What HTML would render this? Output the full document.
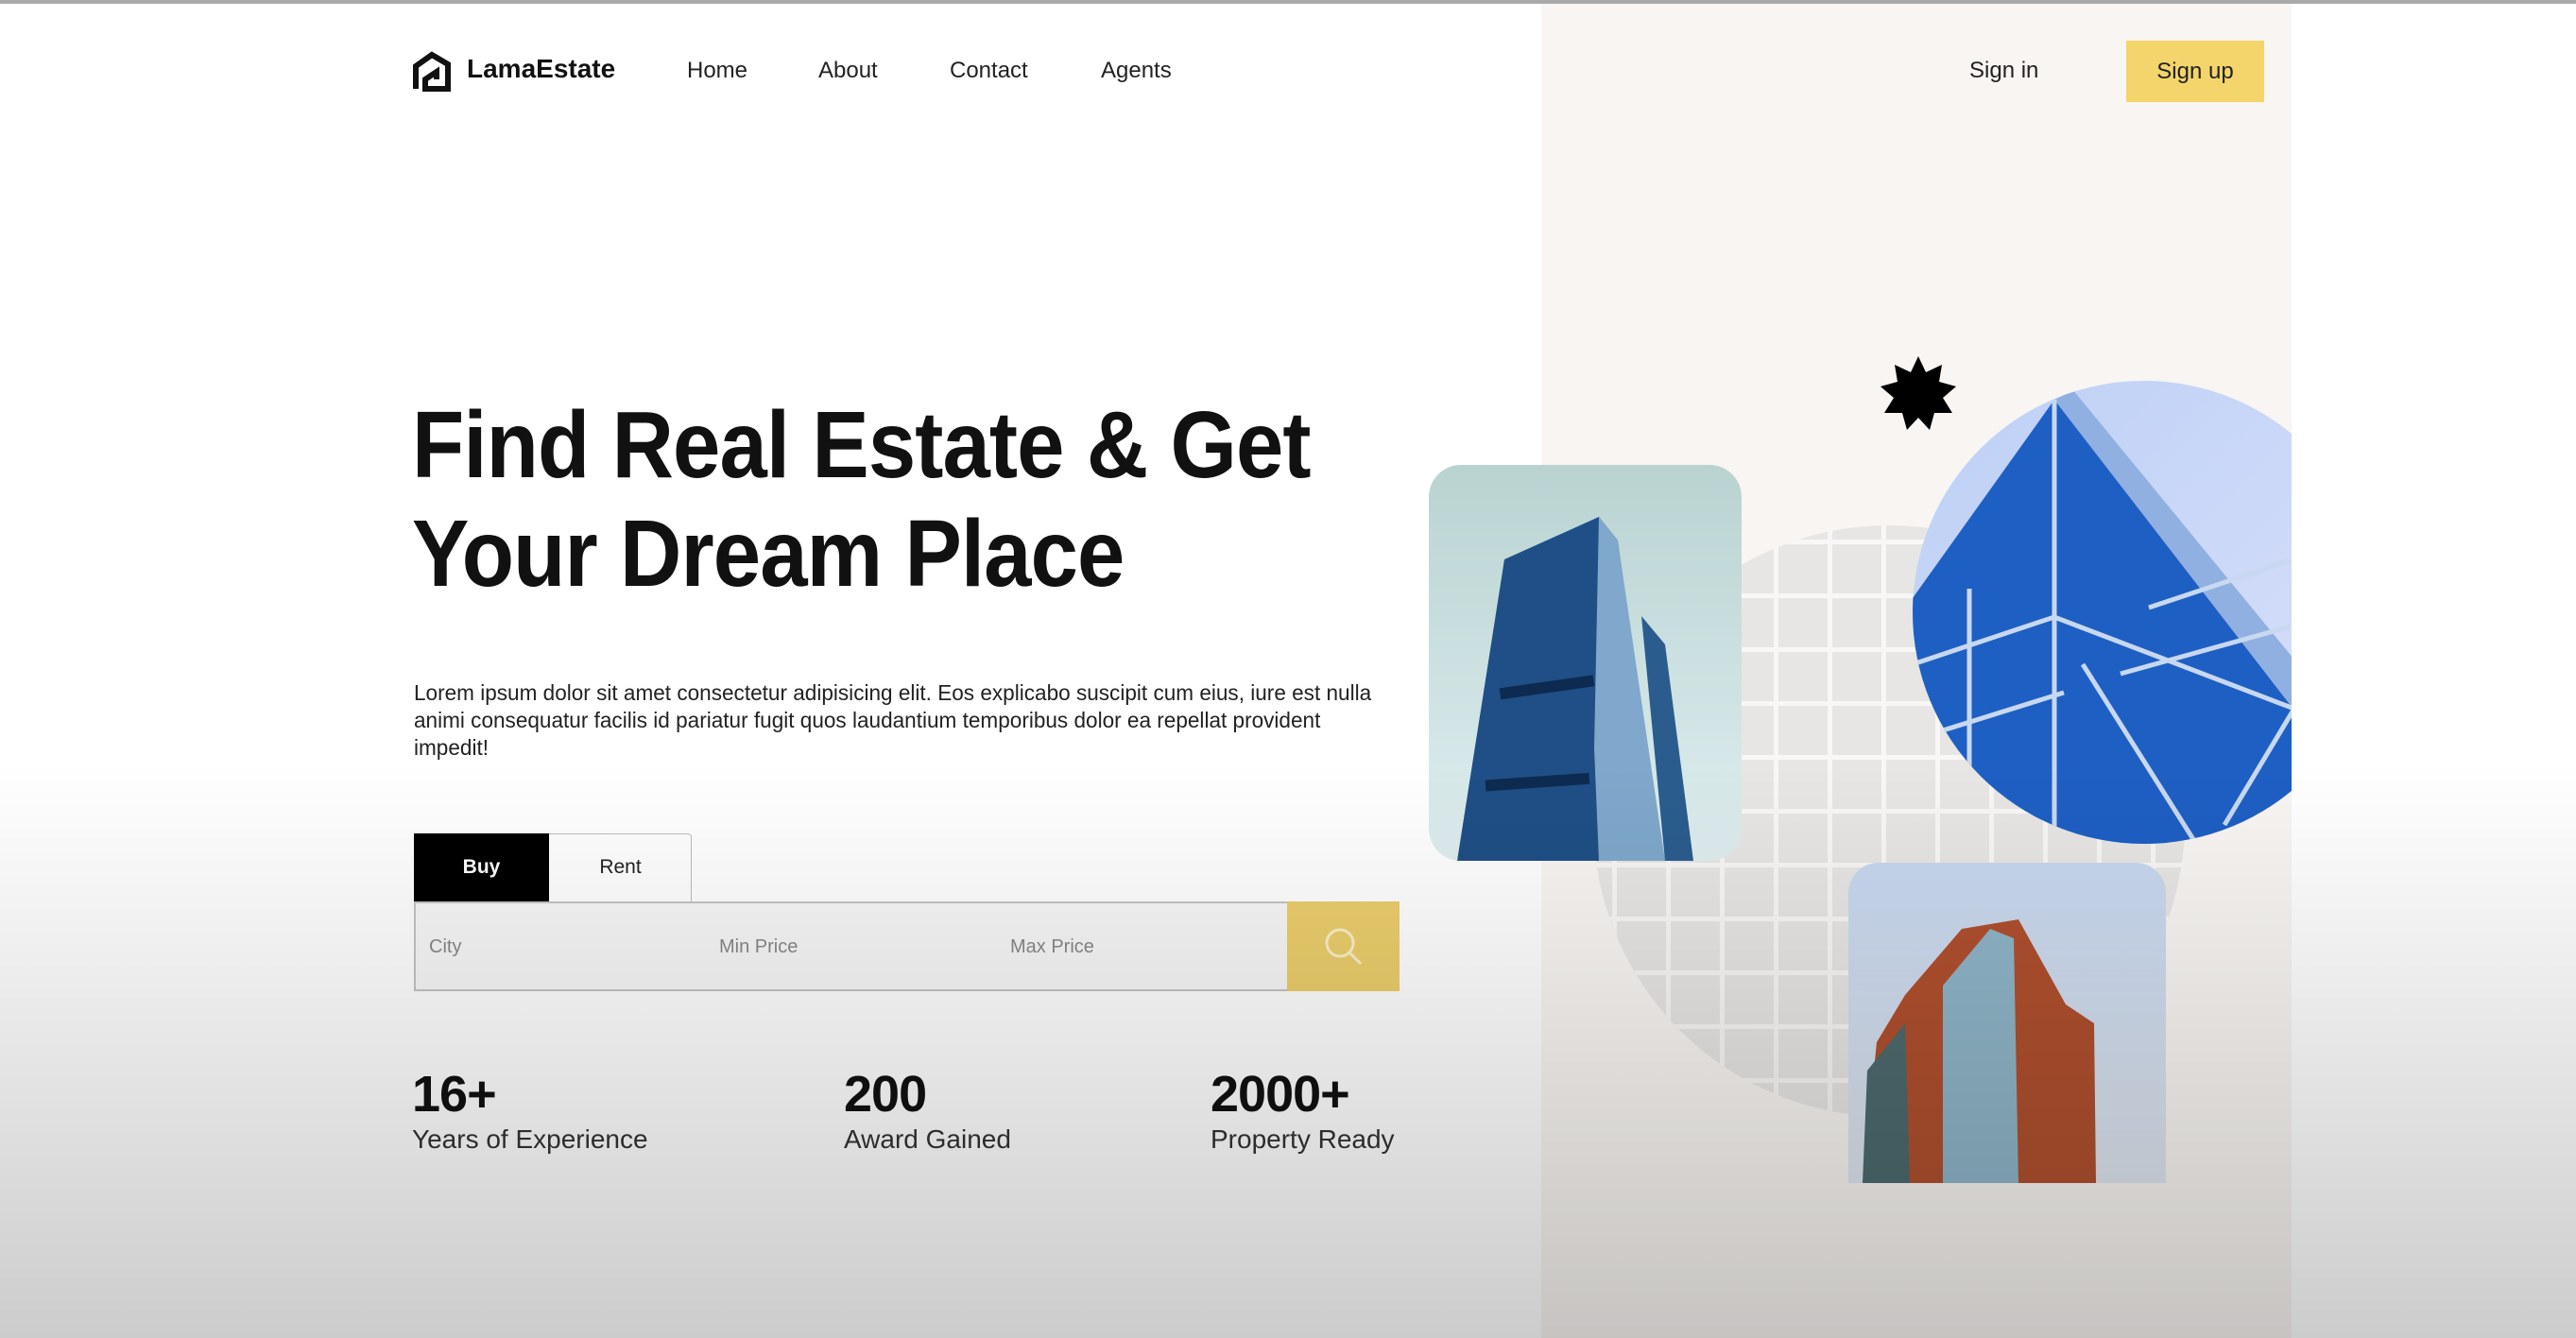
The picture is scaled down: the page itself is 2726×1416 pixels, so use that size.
<!DOCTYPE html>
<html><head><meta charset="utf-8"><style>
*{margin:0;padding:0;box-sizing:border-box}
body{width:2726px;height:1416px;overflow:hidden;position:relative;background:#fff;font-family:"Liberation Sans",sans-serif;color:#111}
.abs{position:absolute}
.topline{left:0;top:0;width:2726px;height:4px;background:#a9a9a9}
.panel{left:1631px;top:4px;width:794px;height:1412px;background:#f8f5f2}
.nav{font-size:24px;color:#222;top:61px}
h1{position:absolute;left:436px;top:414px;font-size:100px;line-height:115px;font-weight:bold;letter-spacing:-1px;color:#111;transform:scaleX(0.905);transform-origin:0 0;white-space:nowrap}
p.desc{position:absolute;left:438px;top:719px;width:1086px;font-size:23.5px;line-height:29px;color:#222;transform:scaleX(0.96);transform-origin:0 0}
.stat b{display:block;font-size:54px;line-height:60px;font-weight:bold;color:#111;letter-spacing:-1px}
.stat span{display:block;font-size:28px;line-height:36px;color:#333;font-weight:300}
.shade{left:0;top:0;width:2726px;height:1416px;background:linear-gradient(to bottom,rgba(0,0,0,0) 0,rgba(0,0,0,0) 57%,rgba(0,0,0,0.06) 70%,rgba(0,0,0,0.2) 100%);pointer-events:none}
</style></head><body>
<div class="abs topline"></div>
<div class="abs panel"></div>

<div class="abs" style="left:1686px;top:556px;width:626px;height:626px;border-radius:50%;overflow:hidden;background-color:#e8e6e4;background-image:linear-gradient(to right,#f8f7f5 5px,transparent 5px),linear-gradient(to bottom,#f8f7f5 5px,transparent 5px);background-size:57px 57px;background-position:20px 15px"></div>

<svg class="abs" style="left:436px;top:54px" width="42" height="44" viewBox="0 0 42 44"><path d="M4 40 V16 L21 4 L38 14 V40 H14 V30 L26 22 V30" fill="none" stroke="#111" stroke-width="6" stroke-linejoin="miter"/></svg>
<div class="abs" style="left:494px;top:57px;font-size:28px;font-weight:bold;color:#111">LamaEstate</div>
<div class="abs nav" style="left:727px">Home</div>
<div class="abs nav" style="left:866px">About</div>
<div class="abs nav" style="left:1005px">Contact</div>
<div class="abs nav" style="left:1165px">Agents</div>
<div class="abs nav" style="left:2084px">Sign in</div>
<div class="abs" style="left:2250px;top:43px;width:146px;height:65px;background:#f4d56b;font-size:24px;color:#222;text-align:center;line-height:65px">Sign up</div>

<h1>Find Real Estate &amp; Get<br>Your Dream Place</h1>
<p class="desc">Lorem ipsum dolor sit amet consectetur adipisicing elit. Eos explicabo suscipit cum eius, iure est nulla animi consequatur facilis id pariatur fugit quos laudantium temporibus dolor ea repellat provident impedit!</p>

<div class="abs" style="left:438px;top:882px;width:294px;height:72px;border:1.5px solid #bbb;border-bottom:none;background:#fff;border-radius:4px 4px 0 0"></div>
<div class="abs" style="left:438px;top:882px;width:143px;height:72px;background:#000;color:#fff;font-size:21px;text-align:center;line-height:72px;font-weight:bold">Buy</div>
<div class="abs" style="left:581px;top:882px;width:151px;height:72px;color:#222;font-size:21px;text-align:center;line-height:72px">Rent</div>
<div class="abs" style="left:438px;top:954px;width:1043px;height:95px;border:2px solid #c4c4c4;background:#f7f7f7"></div>
<div class="abs" style="left:454px;top:991px;font-size:20px;color:#888">City</div>
<div class="abs" style="left:761px;top:991px;font-size:20px;color:#888">Min Price</div>
<div class="abs" style="left:1069px;top:991px;font-size:20px;color:#888">Max Price</div>
<div class="abs" style="left:1362px;top:954px;width:119px;height:95px;background:#ecce6c"></div>
<svg class="abs" style="left:1400px;top:980px" width="44" height="44" viewBox="0 0 44 44"><circle cx="18" cy="18" r="14" fill="none" stroke="#fbf0c8" stroke-width="3"/><path d="M28 28 L40 40" stroke="#fbf0c8" stroke-width="3"/></svg>

<div class="abs stat" style="left:436px;top:1128px"><b>16+</b><span>Years of Experience</span></div>
<div class="abs stat" style="left:893px;top:1128px"><b>200</b><span>Award Gained</span></div>
<div class="abs stat" style="left:1281px;top:1128px"><b>2000+</b><span>Property Ready</span></div>

<div class="abs" style="left:1512px;top:492px;width:331px;height:419px;border-radius:34px;overflow:hidden;background:linear-gradient(#b9d3d1,#dfeef0)">
<svg width="331" height="419" viewBox="0 0 331 419"><polygon points="80,100 180,55 200,80 230,300 250,419 30,419" fill="#1f4f86"/><polygon points="180,55 200,80 250,419 180,419 175,300" fill="#7fa8cc"/><polygon points="225,160 250,190 280,419 250,419" fill="#2a5d8e"/><rect x="75" y="230" width="100" height="12" fill="#0d2a50" transform="rotate(-8 120 236)"/><rect x="60" y="330" width="110" height="12" fill="#0d2a50" transform="rotate(-4 110 336)"/></svg></div>

<div class="abs" style="left:2024px;top:403px;width:401px;height:490px;overflow:hidden">
<div style="position:absolute;left:0;top:0;width:490px;height:490px;border-radius:50%;overflow:hidden;background:linear-gradient(135deg,#bcd0f5,#dbe0fb)">
<svg width="490" height="490" viewBox="0 0 490 490"><polygon points="0,230 150,20 490,460 490,490 0,490" fill="#1e5fc4"/><polygon points="150,20 170,10 490,400 490,460" fill="#8fb0e0"/><g stroke="#c8d8f0" stroke-width="5" fill="none"><path d="M0 300 L150 250 L490 380"/><path d="M0 380 L160 330"/><path d="M60 220 L60 490"/><path d="M150 20 L150 490"/><path d="M180 300 L300 490"/><path d="M250 240 L400 190"/><path d="M220 310 L400 260"/><path d="M330 470 L420 320"/></g></svg></div></div>

<svg class="abs" style="left:1989px;top:376px" width="82" height="82" viewBox="-41 -41 82 82"><polygon fill="#000" points="0,-40 8,-23 25,-31 22,-13 40,-8 26,4 36,20 17,20 12,38 0,25 -12,38 -17,20 -36,20 -26,4 -40,-8 -22,-13 -25,-31 -8,-23"/></svg>

<div class="abs" style="left:1956px;top:913px;width:336px;height:339px;border-radius:32px 32px 0 0;overflow:hidden;background:linear-gradient(#c7d7ee,#dfe6f0)">
<svg width="336" height="339" viewBox="0 0 336 339"><polygon points="60,140 120,70 180,60 230,150 260,170 262,339 15,339 30,190" fill="#b0502e"/><polygon points="100,130 150,70 175,80 180,339 100,339" fill="#8fb5c8"/><polygon points="20,220 60,170 65,339 15,339" fill="#4d6a6e"/></svg></div>

<div class="abs shade"></div>
</body></html>
